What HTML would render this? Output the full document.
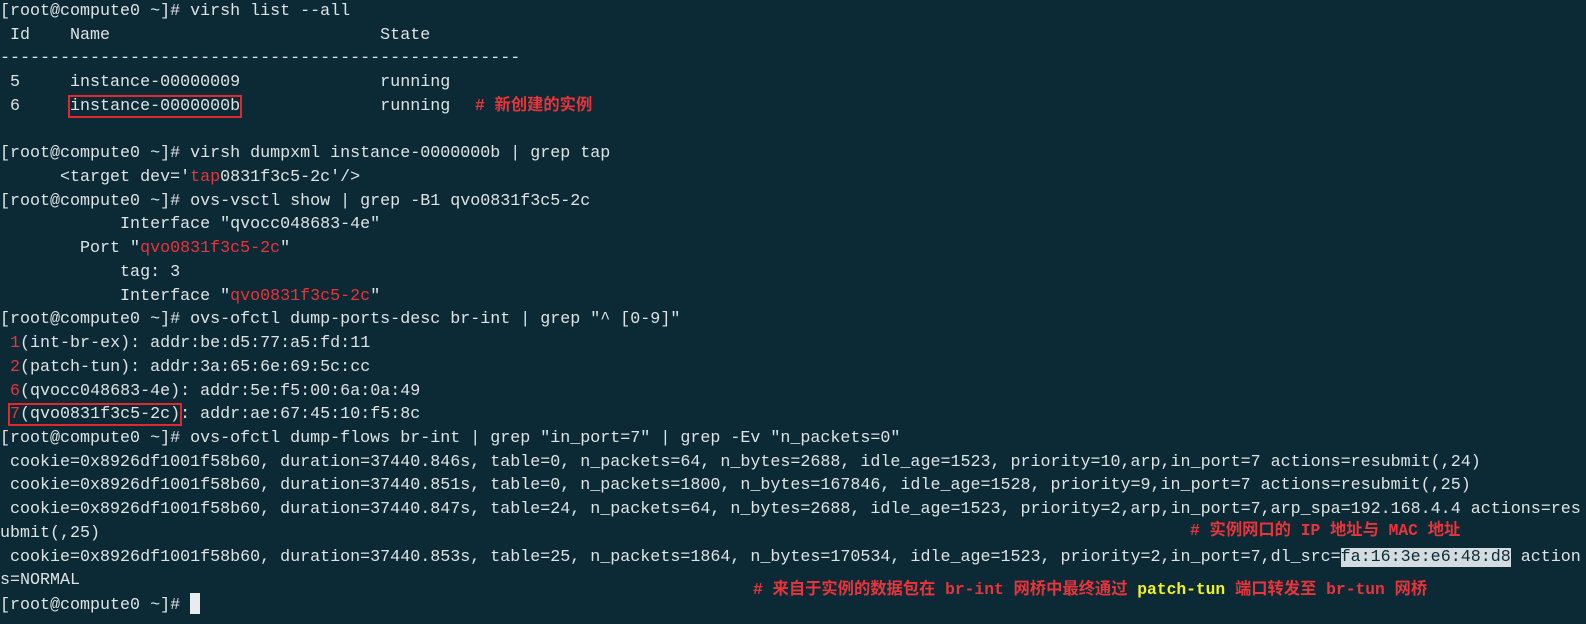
<!DOCTYPE html>
<html><head><meta charset="utf-8"><style>
html,body{margin:0;padding:0;background:#0b2a35;width:1586px;height:624px;overflow:hidden}
#w{position:absolute;left:0;top:2px;width:1586px;height:622px}
.l{position:absolute;left:0;height:24px;line-height:24px;margin:0;font-family:"Liberation Mono","DejaVu Sans Mono",monospace;font-size:16.68px;color:#dfe3e4;white-space:pre}
.r{color:#e8343a}
.b{outline:2px solid #e0282e}
.hl{background:#d5dcdf;color:#0b2a35}
.c{position:absolute;font-family:"Liberation Mono","Noto Sans CJK SC",monospace;font-weight:bold;font-size:16.3px;color:#e8343a;white-space:pre;line-height:24px}
.y{color:#f2f21e}
.cur{display:inline-block;width:10px;height:21px;background:#e8ecee;vertical-align:-5px}
</style></head><body><div id="w">
<div class="l" style="top:-2px">[root@compute0 ~]# virsh list --all</div>
<div class="l" style="top:21.72px"> Id    Name                           State</div>
<div class="l" style="top:45.44px">----------------------------------------------------</div>
<div class="l" style="top:69.16px"> 5     instance-00000009              running</div>
<div class="l" style="top:92.88px"> 6     <span class="b">instance-0000000b</span>              running</div>
<div class="l" style="top:140.32px">[root@compute0 ~]# virsh dumpxml instance-0000000b | grep tap</div>
<div class="l" style="top:164.04px">      &lt;target dev='<span class="r">tap</span>0831f3c5-2c'/&gt;</div>
<div class="l" style="top:187.76px">[root@compute0 ~]# ovs-vsctl show | grep -B1 qvo0831f3c5-2c</div>
<div class="l" style="top:211.48px">            Interface "qvocc048683-4e"</div>
<div class="l" style="top:235.2px">        Port "<span class="r">qvo0831f3c5-2c</span>"</div>
<div class="l" style="top:258.92px">            tag: 3</div>
<div class="l" style="top:282.64px">            Interface "<span class="r">qvo0831f3c5-2c</span>"</div>
<div class="l" style="top:306.36px">[root@compute0 ~]# ovs-ofctl dump-ports-desc br-int | grep "^ [0-9]"</div>
<div class="l" style="top:330.08px"> <span class="r">1</span>(int-br-ex): addr:be:d5:77:a5:fd:11</div>
<div class="l" style="top:353.8px"> <span class="r">2</span>(patch-tun): addr:3a:65:6e:69:5c:cc</div>
<div class="l" style="top:377.52px"> <span class="r">6</span>(qvocc048683-4e): addr:5e:f5:00:6a:0a:49</div>
<div class="l" style="top:401.24px"> <span class="b"><span class="r">7</span>(qvo0831f3c5-2c)</span>: addr:ae:67:45:10:f5:8c</div>
<div class="l" style="top:424.96px">[root@compute0 ~]# ovs-ofctl dump-flows br-int | grep "in_port=7" | grep -Ev "n_packets=0"</div>
<div class="l" style="top:448.68px"> cookie=0x8926df1001f58b60, duration=37440.846s, table=0, n_packets=64, n_bytes=2688, idle_age=1523, priority=10,arp,in_port=7 actions=resubmit(,24)</div>
<div class="l" style="top:472.4px"> cookie=0x8926df1001f58b60, duration=37440.851s, table=0, n_packets=1800, n_bytes=167846, idle_age=1528, priority=9,in_port=7 actions=resubmit(,25)</div>
<div class="l" style="top:496.12px"> cookie=0x8926df1001f58b60, duration=37440.847s, table=24, n_packets=64, n_bytes=2688, idle_age=1523, priority=2,arp,in_port=7,arp_spa=192.168.4.4 actions=res</div>
<div class="l" style="top:519.84px">ubmit(,25)</div>
<div class="l" style="top:543.56px"> cookie=0x8926df1001f58b60, duration=37440.853s, table=25, n_packets=1864, n_bytes=170534, idle_age=1523, priority=2,in_port=7,dl_src=<span class="hl">fa:16:3e:e6:48:d8</span> action</div>
<div class="l" style="top:567.28px">s=NORMAL</div>
<div class="l" style="top:591px">[root@compute0 ~]# <span class="cur"></span></div>
<div class="c" style="left:475px;top:92px"># 新创建的实例</div>
<div class="c" style="left:1190px;top:517px"># 实例网口的 IP 地址与 MAC 地址</div>
<div class="c" style="left:753px;top:576px"># 来自于实例的数据包在 br-int 网桥中最终通过 <span class="y">patch-tun</span> 端口转发至 br-tun 网桥</div>
</div></body></html>
